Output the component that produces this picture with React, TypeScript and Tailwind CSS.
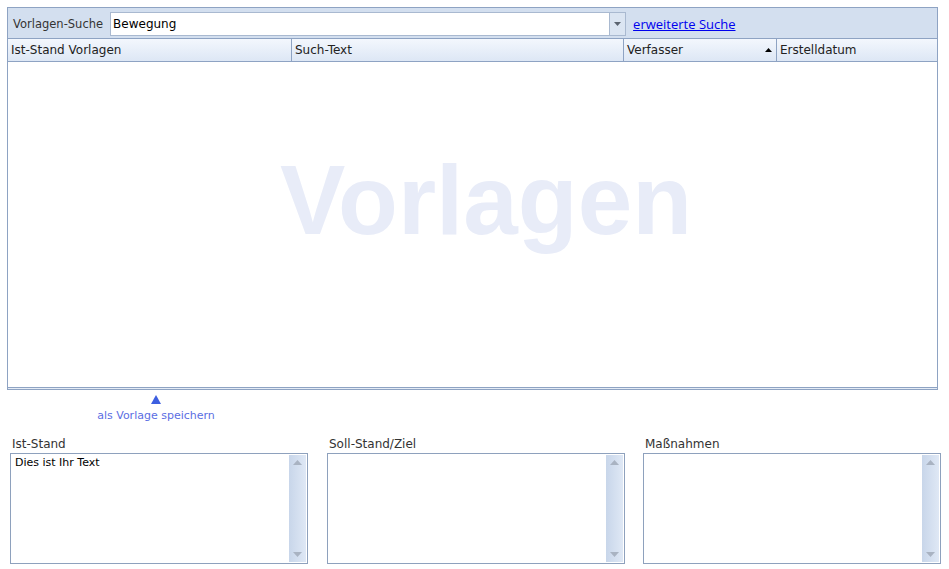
import React from "react";

const font = { fontFamily: '"DejaVu Sans", Tahoma, sans-serif' };

function ScrollBox({ label, text, className }: { label: string; text?: string; className?: string }) {
  return (
    <div className={"flex flex-col w-[298px] " + (className ?? "")}>
      <div className="h-[19px] pl-[2px] pt-[3px] text-[12px] leading-[14px] text-[#333]">{label}</div>
      <div className="flex h-[111px] border border-[#8ea1bd] bg-white">
        <div className="flex-1 pl-[4px] pt-[2px] text-[11px] leading-[14px] text-black">{text}</div>
        <div className="my-px mr-px w-[17px] flex flex-col items-center justify-between bg-gradient-to-r from-[#c8d6ea] to-[#dfe8f5] py-[5px]">
          <svg width="9" height="5" viewBox="0 0 9 5"><path d="M4.5 0L9 5H0z" fill="#a9b3c2" /></svg>
          <svg width="9" height="5" viewBox="0 0 9 5"><path d="M0 0H9L4.5 5z" fill="#a9b3c2" /></svg>
        </div>
      </div>
    </div>
  );
}

export default function App() {
  return (
    <div className="w-[949px] h-[569px] bg-white overflow-hidden" style={font}>
      <div className="ml-[7px] mt-[7px] w-[931px] h-[383px] flex flex-col border-x border-t border-[#8ea3c3] bg-white">
        <div className="h-[30px] flex items-center bg-[#d3dfef] pl-[5px]">
          <span className="text-[11.5px] text-[#333] mr-[7px] mt-[3px]">Vorlagen-Suche</span>
          <div className="w-[516px] h-[24px] mt-[2px] flex border border-[#a9b9d0] bg-white">
            <div className="flex-1 pl-[2px] flex items-center text-[12px] text-black">Bewegung</div>
            <div className="w-[16px] border-l border-[#a9b9d0] bg-[#dbe5f2] flex items-center justify-center">
              <svg width="7" height="4" viewBox="0 0 7 4"><path d="M0 0H7L3.5 4z" fill="#5b6470" /></svg>
            </div>
          </div>
          <a className="ml-[7px] mt-[3px] text-[13px] text-[#0000ee] underline" style={{ fontFamily: '"Open Sans", "DejaVu Sans", sans-serif' }}>erweiterte Suche</a>
        </div>
        <div className="h-[24px] flex border-y border-[#8ea3c3] bg-gradient-to-b from-[#f3f7fd] to-[#dde7f5] text-[12px] text-[#222]">
          <div className="w-[284px] border-r border-[#8ea3c3] pl-[3px] flex items-center">Ist-Stand Vorlagen</div>
          <div className="w-[332px] border-r border-[#8ea3c3] pl-[3px] flex items-center">Such-Text</div>
          <div className="w-[153px] border-r border-[#8ea3c3] pl-[3px] pr-[4px] flex items-center justify-between">
            <span>Verfasser</span>
            <svg width="7" height="4" viewBox="0 0 7 4"><path d="M3.5 0L7 4H0z" fill="#000" /></svg>
          </div>
          <div className="flex-1 pl-[3px] flex items-center">Erstelldatum</div>
        </div>
        <div className="flex-1 flex items-center justify-center bg-white border-b border-[#8ea3c3]">
          <span className="text-[98px] font-bold text-[#e8ecf8] leading-none -mt-[50px] ml-[27px]" style={{ fontFamily: '"Liberation Sans", Arial, sans-serif' }}>Vorlagen</span>
        </div>
        <div className="h-[2px] border-b border-[#8ea3c3] bg-[#e4ebf5]" />
      </div>
      <div className="ml-[86px] w-[140px] flex flex-col items-center mt-[5px]">
        <svg width="10" height="9" viewBox="0 0 10 9"><path d="M5 0L10 9H0z" fill="#3d5fe0" /></svg>
        <span className="text-[11px] leading-[13px] mt-[5px] text-[#5b6ee3] whitespace-nowrap">als Vorlage speichern</span>
      </div>
      <div className="flex ml-[10px] mt-[12px]">
        <ScrollBox label="Ist-Stand" text="Dies ist Ihr Text" />
        <ScrollBox label="Soll-Stand/Ziel" className="ml-[19px]" />
        <ScrollBox label="Maßnahmen" className="ml-[18px]" />
      </div>
    </div>
  );
}
